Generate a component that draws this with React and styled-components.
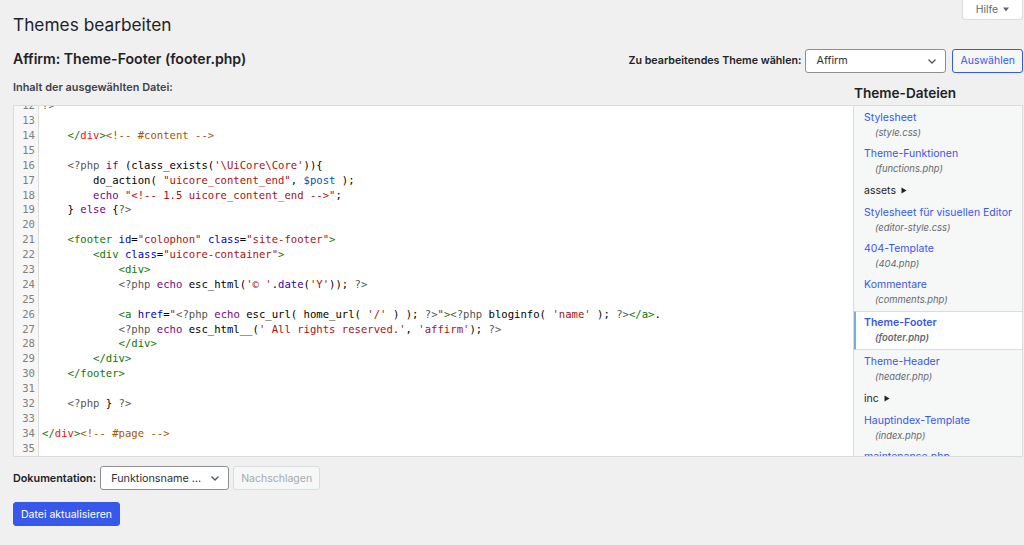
import React from "react";
import styled, { createGlobalStyle } from "styled-components";

const Global = createGlobalStyle`
  html, body { margin: 0; padding: 0; background: #f0f0f1; }
  body {
    font-family: Inter, "Noto Sans", "Liberation Sans", sans-serif;
    color: #1d2327;
    font-size: 10.8px;
    width: 1024px;
    height: 545px;
    overflow: hidden;
  }
  * { box-sizing: border-box; }
`;

const Page = styled.div`
  padding: 0 1px 0 13px;
`;

const Header = styled.div`
  display: flex;
  justify-content: space-between;
  align-items: flex-start;
`;

const Title = styled.h1`
  margin: 14px 0 0;
  font-size: 17.3px;
  font-weight: 400;
  line-height: 22px;
  color: #1d2327;
`;

const HelpTab = styled.button`
  display: flex;
  align-items: center;
  gap: 5px;
  height: 21px;
  width: 61px;
  margin-top: -1px;
  justify-content: center;
  background: #fff;
  border: 1px solid #dcdcde;
  border-top: none;
  border-radius: 0 0 3px 3px;
  font: inherit;
  font-size: 10.4px;
  color: #646970;
  padding: 0;
`;

const TitleRow = styled.div`
  display: flex;
  justify-content: space-between;
  align-items: center;
  margin-top: 12px;
  height: 25px;
`;

const FileTitle = styled.h2`
  margin: 0;
  font-size: 14.1px;
  font-weight: 600;
  color: #1d2327;
  transform: translateY(-2px);
`;

const ThemeForm = styled.div`
  display: flex;
  align-items: center;
  gap: 4px;
`;

const Label = styled.span`
  font-size: ${(p) => p.$size || 10.7}px;
  font-weight: 600;
  color: #1d2327;
`;

const Select = styled.div`
  display: flex;
  align-items: center;
  justify-content: space-between;
  width: ${(p) => p.$w}px;
  height: 24px;
  padding: 0 8px 0 10px;
  background: #fff;
  border: 1px solid #8c8f94;
  border-radius: 3px;
  font-size: 10.8px;
  color: #2c3338;
`;

const Button = styled.button`
  height: 24px;
  padding: 0 7px;
  border-radius: 3px;
  font: inherit;
  font-size: 10.5px;
  background: ${(p) => (p.$primary ? "#3858e9" : "#f6f7f7")};
  color: ${(p) => (p.$primary ? "#fff" : p.$disabled ? "#a7aaad" : "#3858e9")};
  border: 1px solid
    ${(p) => (p.$primary ? "#3858e9" : p.$disabled ? "#dcdcde" : "#3858e9")};
  margin-left: ${(p) => p.$ml || 0}px;
`;

const Main = styled.div`
  display: grid;
  grid-template-columns: 840px 170px;
  margin-top: 5px;
`;

const Column = styled.div`
  display: flex;
  flex-direction: column;
`;

const ColHead = styled.div`
  height: 27px;
  display: flex;
  align-items: ${(p) => (p.$end ? "flex-end" : "flex-start")};
  padding-bottom: ${(p) => (p.$end ? 3 : 0)}px;
`;

const SmallLabel = styled.span`
  font-size: 10.9px;
  font-weight: 600;
  line-height: 18px;
  color: #3c434a;
`;

const SideTitle = styled.h2`
  margin: 0 0 0 1px;
  font-size: 13.6px;
  font-weight: 600;
  line-height: 18px;
  color: #1d2327;
`;

const Editor = styled.div`
  height: 352px;
  background: #fff;
  border: 1px solid #dcdcde;
  border-right: none;
  overflow: hidden;
  display: flex;
  font-family: "DejaVu Sans Mono", "Liberation Mono", monospace;
  font-size: 10.6px;
  line-height: 14.9px;
`;

const Gutter = styled.div`
  width: 25px;
  flex: none;
  background: #f7f7f7;
  border-right: 1px solid #dddddd;
  text-align: right;
  padding-right: 3px;
  color: #808080;
`;

const Scroll = styled.div`
  margin-top: -7.8px;
`;

const Code = styled.div`
  flex: 1;
  padding-left: 3px;
  white-space: pre;
  color: #000;
`;

const Line = styled.div`
  height: 14.9px;
`;

const colors = {
  tag: "#117700",
  err: "#ee1111",
  com: "#aa5500",
  meta: "#555555",
  kw: "#770088",
  str: "#aa1111",
  v2: "#0055aa",
  attr: "#0000cc",
  bi: "#3300aa",
  p: "#000000",
};

const Tok = styled.span`
  color: ${(p) => colors[p.$k]};
`;

const Side = styled.div`
  height: 352px;
  background: #f6f7f7;
  border: 1px solid #dcdcde;
  overflow: hidden;
  padding-top: 1px;
`;

const Item = styled.div`
  padding: ${(p) => (p.$active ? "3px 0 4px 8px" : "3px 0 3px 10px")};
  background: ${(p) => (p.$active ? "#fff" : "transparent")};
  border-left: ${(p) => (p.$active ? "3px solid #72aee6" : "none")};
  border-top: ${(p) => (p.$active ? "1px solid #dcdcde" : "none")};
  border-bottom: ${(p) => (p.$active ? "1px solid #dcdcde" : "none")};
  margin: ${(p) => (p.$active ? "1px 0 1px -1px" : "0")};
`;

const ItemName = styled.div`
  font-size: 10.5px;
  line-height: 15px;
  color: #3858e9;
  font-weight: ${(p) => (p.$active ? 600 : 400)};
`;

const ItemFile = styled.div`
  font-size: 9.4px;
  line-height: 15px;
  font-style: italic;
  color: #646970;
  padding-left: 11px;
  font-weight: ${(p) => (p.$active ? 600 : 400)};
`;

const Folder = styled.div`
  display: flex;
  align-items: center;
  gap: 5px;
  padding: 4px 0 4px 10px;
  font-size: 10.5px;
  line-height: 15px;
  color: #1d2327;
`;

const DocRow = styled.div`
  display: flex;
  align-items: center;
  gap: 4px;
  margin-top: 9px;
`;

const SubmitRow = styled.div`
  margin-top: 12px;
`;

const Chevron = () => (
  <svg width="10" height="10" viewBox="0 0 10 10">
    <polyline points="1.5,3.5 5,7 8.5,3.5" fill="none" stroke="#50575e" strokeWidth="1.3" />
  </svg>
);

const TriRight = () => (
  <svg width="6" height="7" viewBox="0 0 6 7">
    <polygon points="0.5,0.5 5.5,3.5 0.5,6.5" fill="#1d2327" />
  </svg>
);

const TriDown = () => (
  <svg width="6" height="5" viewBox="0 0 6 5">
    <polygon points="0,0.5 6,0.5 3,4.5" fill="#646970" />
  </svg>
);

const T = (k, s) => [k, s];

const lines = [
  [T("meta", "?>")],
  [],
  [T("p", "    "), T("tag", "</"), T("err", "div"), T("tag", ">"), T("com", "<!-- #content -->")],
  [],
  [T("p", "    "), T("meta", "<?php"), T("p", " "), T("kw", "if"), T("p", " (class_exists("), T("str", "'\\UiCore\\Core'"), T("p", ")){")],
  [T("p", "        do_action( "), T("str", "\"uicore_content_end\""), T("p", ", "), T("v2", "$post"), T("p", " );")],
  [T("p", "        "), T("kw", "echo"), T("p", " "), T("str", "\"<!-- 1.5 uicore_content_end -->\""), T("p", ";")],
  [T("p", "    } "), T("kw", "else"), T("p", " {"), T("meta", "?>")],
  [],
  [T("p", "    "), T("tag", "<footer"), T("p", " "), T("attr", "id"), T("p", "="), T("str", "\"colophon\""), T("p", " "), T("attr", "class"), T("p", "="), T("str", "\"site-footer\""), T("tag", ">")],
  [T("p", "        "), T("tag", "<div"), T("p", " "), T("attr", "class"), T("p", "="), T("str", "\"uicore-container\""), T("tag", ">")],
  [T("p", "            "), T("tag", "<div>")],
  [T("p", "            "), T("meta", "<?php"), T("p", " "), T("kw", "echo"), T("p", " esc_html("), T("str", "'© '"), T("p", "."), T("bi", "date"), T("p", "("), T("str", "'Y'"), T("p", ")); "), T("meta", "?>")],
  [],
  [T("p", "            "), T("tag", "<a"), T("p", " "), T("attr", "href"), T("p", "="), T("str", "\""), T("meta", "<?php"), T("p", " "), T("kw", "echo"), T("p", " esc_url( home_url( "), T("str", "'/'"), T("p", " ) ); "), T("meta", "?>"), T("str", "\""), T("tag", ">"), T("meta", "<?php"), T("p", " bloginfo( "), T("str", "'name'"), T("p", " ); "), T("meta", "?>"), T("tag", "</a>"), T("p", ".")],
  [T("p", "            "), T("meta", "<?php"), T("p", " "), T("kw", "echo"), T("p", " esc_html__("), T("str", "' All rights reserved.'"), T("p", ", "), T("str", "'affirm'"), T("p", "); "), T("meta", "?>")],
  [T("p", "            "), T("tag", "</div>")],
  [T("p", "        "), T("tag", "</div>")],
  [T("p", "    "), T("tag", "</footer>")],
  [],
  [T("p", "    "), T("meta", "<?php"), T("p", " } "), T("meta", "?>")],
  [],
  [T("tag", "</"), T("err", "div"), T("tag", ">"), T("com", "<!-- #page -->")],
  [],
];

const files = [
  { name: "Stylesheet", file: "(style.css)" },
  { name: "Theme-Funktionen", file: "(functions.php)" },
  { folder: "assets" },
  { name: "Stylesheet für visuellen Editor", file: "(editor-style.css)" },
  { name: "404-Template", file: "(404.php)" },
  { name: "Kommentare", file: "(comments.php)" },
  { name: "Theme-Footer", file: "(footer.php)", active: true },
  { name: "Theme-Header", file: "(header.php)" },
  { folder: "inc" },
  { name: "Hauptindex-Template", file: "(index.php)" },
  { name: "maintenance.php", file: "" },
];

export default function App() {
  return (
    <Page>
      <Global />
      <Header>
        <Title>Themes bearbeiten</Title>
        <HelpTab>
          Hilfe <TriDown />
        </HelpTab>
      </Header>
      <TitleRow>
        <FileTitle>Affirm: Theme-Footer (footer.php)</FileTitle>
        <ThemeForm>
          <Label>Zu bearbeitendes Theme wählen:</Label>
          <Select $w={141}>
            Affirm <Chevron />
          </Select>
          <Button $ml={2}>Auswählen</Button>
        </ThemeForm>
      </TitleRow>
      <Main>
        <Column>
          <ColHead>
            <SmallLabel>Inhalt der ausgewählten Datei:</SmallLabel>
          </ColHead>
          <Editor>
            <Gutter>
              <Scroll>
                {lines.map((_, i) => (
                  <Line key={i}>{i + 12}</Line>
                ))}
              </Scroll>
            </Gutter>
            <Code>
              <Scroll>
                {lines.map((toks, i) => (
                  <Line key={i}>
                    {toks.map(([k, s], j) => (
                      <Tok key={j} $k={k}>
                        {s}
                      </Tok>
                    ))}
                  </Line>
                ))}
              </Scroll>
            </Code>
          </Editor>
        </Column>
        <Column>
          <ColHead $end>
            <SideTitle>Theme-Dateien</SideTitle>
          </ColHead>
          <Side>
            {files.map((f, i) =>
              f.folder ? (
                <Folder key={i}>
                  {f.folder} <TriRight />
                </Folder>
              ) : (
                <Item key={i} $active={f.active}>
                  <ItemName $active={f.active}>{f.name}</ItemName>
                  {f.file && <ItemFile $active={f.active}>{f.file}</ItemFile>}
                </Item>
              )
            )}
          </Side>
        </Column>
      </Main>
      <DocRow>
        <Label $size={10.8}>Dokumentation:</Label>
        <Select $w={129}>
          Funktionsname … <Chevron />
        </Select>
        <Button $disabled>Nachschlagen</Button>
      </DocRow>
      <SubmitRow>
        <Button $primary>Datei aktualisieren</Button>
      </SubmitRow>
    </Page>
  );
}
